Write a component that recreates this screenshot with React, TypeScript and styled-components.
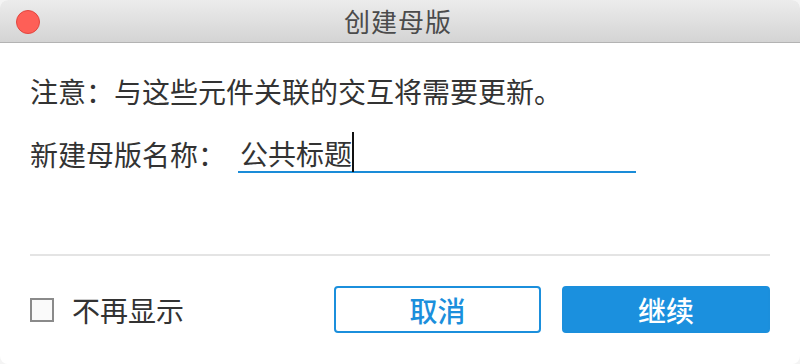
import { createGlobalStyle, styled } from "styled-components";

const GlobalStyle = createGlobalStyle`
  html, body {
    margin: 0;
    padding: 0;
    background: #f4f4f4;
  }
  body {
    font-family: "Noto Sans CJK SC", "Noto Sans", sans-serif;
  }
`;

const Window = styled.div`
  width: 800px;
  height: 364px;
  box-sizing: border-box;
  display: flex;
  flex-direction: column;
  background: #fff;
  border-radius: 8px;
  overflow: hidden;
`;

const TitleBar = styled.div`
  position: relative;
  height: 42px;
  flex: none;
  display: flex;
  align-items: center;
  justify-content: center;
  background: linear-gradient(#ececec, #d4d4d4);
  border-bottom: 1px solid #b3b3b3;
`;

const CloseDot = styled.span`
  position: absolute;
  left: 16px;
  top: 10px;
  width: 24px;
  height: 24px;
  box-sizing: border-box;
  border-radius: 50%;
  background: #fe5f57;
  border: 1px solid #e2463f;
`;

const Title = styled.span`
  font-size: 26px;
  color: #4b4b4b;
  letter-spacing: 1px;
  line-height: 1;
  margin-left: -4px;
`;

const Body = styled.div`
  flex: 1;
  display: flex;
  flex-direction: column;
  padding: 0 30px;
  color: #333;
  font-size: 28px;
`;

const Notice = styled.div`
  margin-top: 28px;
  line-height: 40px;
`;

const FieldRow = styled.div`
  display: flex;
  align-items: center;
  margin-top: 24px;
`;

const Label = styled.label`
  width: 208px;
  line-height: 38px;
`;

const Field = styled.div`
  width: 396px;
  height: 36px;
  border-bottom: 2px solid #1a8cd8;
  display: flex;
  align-items: center;
  padding-left: 2px;
  box-sizing: content-box;
`;

const Caret = styled.span`
  display: inline-block;
  width: 2px;
  height: 40px;
  margin-top: -2px;
  background: #111;
`;

const Divider = styled.hr`
  margin: 81px 0 0;
  border: none;
  height: 2px;
  background: #e4e4e4;
`;

const Footer = styled.div`
  display: flex;
  align-items: center;
  margin-top: 30px;
`;

const CheckBox = styled.span`
  width: 24px;
  height: 24px;
  box-sizing: border-box;
  border: 2px solid #8a8a8a;
  background: #fafafa;
`;

const CheckLabel = styled.span`
  margin-left: 18px;
  line-height: 38px;
  flex: 1;
`;

const Button = styled.button<{ $primary?: boolean }>`
  width: ${(p) => (p.$primary ? 208 : 207)}px;
  height: 47px;
  margin-left: ${(p) => (p.$primary ? 21 : 0)}px;
  box-sizing: border-box;
  border-radius: 4px;
  border: 2px solid #1b8fdc;
  background: ${(p) => (p.$primary ? "#1b90de" : "#fff")};
  color: ${(p) => (p.$primary ? "#fff" : "#1b8fdc")};
  font-family: inherit;
  font-size: 28px;
  font-weight: 500;
  padding: 0;
  line-height: 1;
`;

export default function App() {
  return (
    <>
      <GlobalStyle />
      <Window>
        <TitleBar>
          <CloseDot />
          <Title>创建母版</Title>
        </TitleBar>
        <Body>
          <Notice>注意：与这些元件关联的交互将需要更新。</Notice>
          <FieldRow>
            <Label>新建母版名称：</Label>
            <Field>
              公共标题
              <Caret />
            </Field>
          </FieldRow>
          <Divider />
          <Footer>
            <CheckBox />
            <CheckLabel>不再显示</CheckLabel>
            <Button>取消</Button>
            <Button $primary>继续</Button>
          </Footer>
        </Body>
      </Window>
    </>
  );
}
